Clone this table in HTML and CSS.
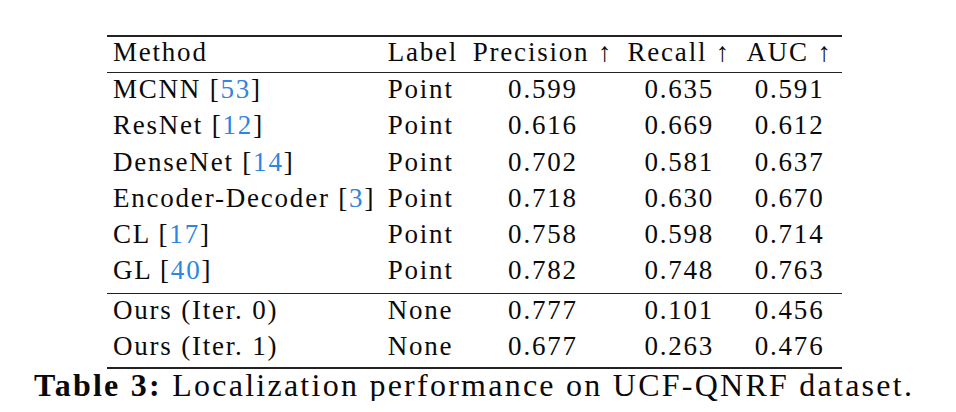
FILE: index.html
```html
<!DOCTYPE html>
<html lang="en">
<head>
<meta charset="utf-8">
<title>Table 3: Localization performance on UCF-QNRF dataset</title>
<link rel="stylesheet" href="styles.css">
</head>
<body>
<figure class="figure">
  <table class="results">
    <colgroup>
      <col class="col-method">
      <col class="col-label">
      <col class="col-prec">
      <col class="col-rec">
      <col class="col-auc">
    </colgroup>
    <thead>
      <tr>
        <th class="txt">Method</th>
        <th class="txt">Label</th>
        <th class="num">Precision ↑</th>
        <th class="num">Recall ↑</th>
        <th class="num">AUC ↑</th>
      </tr>
    </thead>
    <tbody class="group">
      <tr>
        <td class="txt">MCNN [<a class="cite">53</a>]</td>
        <td class="txt">Point</td>
        <td class="num">0.599</td>
        <td class="num">0.635</td>
        <td class="num">0.591</td>
      </tr>
      <tr>
        <td class="txt">ResNet [<a class="cite">12</a>]</td>
        <td class="txt">Point</td>
        <td class="num">0.616</td>
        <td class="num">0.669</td>
        <td class="num">0.612</td>
      </tr>
      <tr>
        <td class="txt">DenseNet [<a class="cite">14</a>]</td>
        <td class="txt">Point</td>
        <td class="num">0.702</td>
        <td class="num">0.581</td>
        <td class="num">0.637</td>
      </tr>
      <tr>
        <td class="txt">Encoder-Decoder [<a class="cite">3</a>]</td>
        <td class="txt">Point</td>
        <td class="num">0.718</td>
        <td class="num">0.630</td>
        <td class="num">0.670</td>
      </tr>
      <tr>
        <td class="txt">CL [<a class="cite">17</a>]</td>
        <td class="txt">Point</td>
        <td class="num">0.758</td>
        <td class="num">0.598</td>
        <td class="num">0.714</td>
      </tr>
      <tr class="group-end">
        <td class="txt">GL [<a class="cite">40</a>]</td>
        <td class="txt">Point</td>
        <td class="num">0.782</td>
        <td class="num">0.748</td>
        <td class="num">0.763</td>
      </tr>
    </tbody>
    <tbody class="group">
      <tr>
        <td class="txt">Ours (Iter. 0)</td>
        <td class="txt">None</td>
        <td class="num">0.777</td>
        <td class="num">0.101</td>
        <td class="num">0.456</td>
      </tr>
      <tr>
        <td class="txt">Ours (Iter. 1)</td>
        <td class="txt">None</td>
        <td class="num">0.677</td>
        <td class="num">0.263</td>
        <td class="num">0.476</td>
      </tr>
    </tbody>
  </table>
  <figcaption class="caption"><b class="caption-label">Table 3:</b> Localization performance on UCF-QNRF dataset.</figcaption>
</figure>
</body>
</html>
```

FILE: styles.css
```css
html, body {
  margin: 0;
  padding: 0;
  background: #ffffff;
}

body {
  font-family: "Liberation Serif", "Times New Roman", serif;
  color: #0a0a0a;
}

.figure {
  margin: 0 0 0 34px;
  padding-top: 35px;
  width: 880px;
}

.results {
  width: 735px;
  margin: 0 auto;
  table-layout: fixed;
  border-collapse: separate;
  border-spacing: 0;
  border-top: 2px solid #222222;
  border-bottom: 2px solid #222222;
  font-size: 27px;
  line-height: 30px;
  letter-spacing: 1.8px;
}

.col-method { width: 274.8px; }
.col-label  { width: 83.8px; }
.col-prec   { width: 155.8px; }
.col-rec    { width: 116.8px; }
.col-auc    { width: 103.8px; }

.results th,
.results td {
  white-space: nowrap;
  padding-left: 6.4px;
  padding-right: 6.4px;
  font-weight: normal;
  vertical-align: top;
}

.results th {
  padding-top: 0;
  padding-bottom: 5px;
  border-bottom: 1px solid #222222;
}

.results td {
  padding-top: 1px;
  padding-bottom: 5.3px;
}

.results .group-end td {
  padding-bottom: 7.5px;
  border-bottom: 1px solid #222222;
}

.txt { text-align: left; }
.num { text-align: center; }

.cite {
  color: #2e86de;
  text-decoration: none;
}

.caption {
  margin: 0;
  font-size: 32px;
  line-height: 32px;
  letter-spacing: 2.25px;
  text-align: center;
  white-space: nowrap;
}

.caption-label {
  font-weight: bold;
}
```
